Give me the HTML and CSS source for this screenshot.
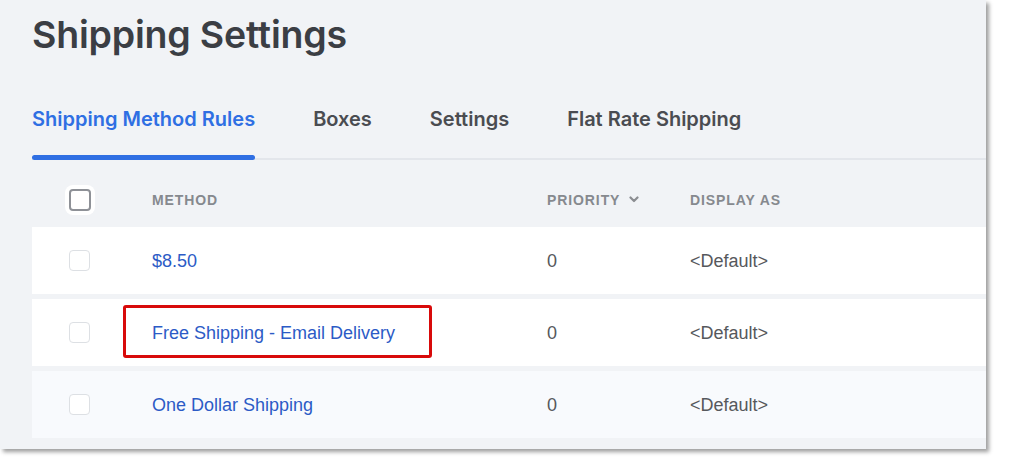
FILE: index.html
```html
<!DOCTYPE html>
<html lang="en">
<head>
<meta charset="utf-8">
<title>Shipping Settings</title>
<link rel="stylesheet" href="styles.css">
</head>
<body>
<div class="frame">
  <div class="page">
    <h1 class="title">Shipping Settings</h1>
    <nav class="tabs">
      <a class="tab active">Shipping Method Rules</a>
      <a class="tab">Boxes</a>
      <a class="tab">Settings</a>
      <a class="tab">Flat Rate Shipping</a>
    </nav>
    <div class="table">
      <div class="row head">
        <div class="c-check"><span class="box head-box"></span></div>
        <div class="c-method label">METHOD</div>
        <div class="c-priority label">PRIORITY
          <svg class="chev" width="10" height="7" viewBox="0 0 10 7"><path d="M1.5 1.5 L5 5 L8.5 1.5" fill="none" stroke="#8b8d91" stroke-width="2.2" stroke-linecap="round" stroke-linejoin="round"/></svg>
        </div>
        <div class="c-display label">DISPLAY AS</div>
      </div>
      <div class="rows">
        <div class="row item">
          <div class="c-check"><span class="box"></span></div>
          <div class="c-method link">$8.50</div>
          <div class="c-priority val">0</div>
          <div class="c-display val">&lt;Default&gt;</div>
        </div>
        <div class="row item">
          <div class="c-check"><span class="box"></span></div>
          <div class="c-method link">Free Shipping - Email Delivery<span class="highlight"></span></div>
          <div class="c-priority val">0</div>
          <div class="c-display val">&lt;Default&gt;</div>
        </div>
        <div class="row item alt">
          <div class="c-check"><span class="box"></span></div>
          <div class="c-method link">One Dollar Shipping</div>
          <div class="c-priority val">0</div>
          <div class="c-display val">&lt;Default&gt;</div>
        </div>
      </div>
    </div>
  </div>
</div>
</body>
</html>
```
FILE: styles.css
```css
* { box-sizing: border-box; }
html, body { margin: 0; padding: 0; background: #ffffff; }
body { width: 1024px; height: 466px; overflow: hidden; }

.frame {
  width: 986px;
  height: 449px;
  background: #f1f3f6;
  box-shadow: 3px 3px 4px rgba(0, 0, 0, 0.38);
  overflow: hidden;
}

.page { padding-left: 32px; }

.title {
  margin: 0;
  padding-top: 13px;
  height: 90px;
  font-family: Inter, "Noto Sans", sans-serif;
  font-weight: 600;
  font-size: 37.5px;
  line-height: 44px;
  color: #3b3e44;
  letter-spacing: -0.2px;
}

.tabs {
  display: flex;
  gap: 58px;
  height: 70px;
  border-bottom: 2px solid #e3e6eb;
}

.tab {
  position: relative;
  display: block;
  padding-top: 15px;
  font-family: Inter, "Noto Sans", sans-serif;
  font-weight: 600;
  font-size: 20px;
  line-height: 28px;
  color: #4a4c51;
}

.tab.active { color: #2f6fe3; }
.tab.active::after {
  content: "";
  position: absolute;
  left: 0;
  right: 0;
  bottom: -2px;
  height: 5px;
  border-radius: 3px;
  background: #2f6fe3;
}

.table { display: flex; flex-direction: column; }

.rows {
  display: flex;
  flex-direction: column;
  gap: 5px;
}

.row {
  display: flex;
  align-items: center;
  height: 67px;
}

.row.head { padding-top: 12px; }

.row.item { background: #ffffff; }
.row.item.alt { background: #f8fafd; }

.c-check { width: 120px; padding-left: 37px; display: flex; align-items: center; }
.c-method { position: relative; width: 395px; }
.c-priority { width: 143px; display: flex; align-items: center; gap: 9px; }
.c-display { flex: 1; }

.box {
  display: block;
  width: 21px;
  height: 21px;
  border: 1px solid #dde0e4;
  border-radius: 4px;
  background: #ffffff;
}

.head-box {
  width: 22px;
  height: 22px;
  border: 2px solid #8e9197;
  border-radius: 4px;
  box-shadow: 0 0 0 4px #ffffff;
}

.label {
  font-family: "Liberation Sans", Arial, sans-serif;
  font-weight: 700;
  font-size: 14px;
  line-height: 20px;
  letter-spacing: 0.9px;
  color: #86898e;
}

.chev { display: block; }

.link {
  font-family: "Liberation Sans", Arial, sans-serif;
  font-size: 18px;
  line-height: 20px;
  color: #2c5bc6;
}

.val {
  font-family: "Liberation Sans", Arial, sans-serif;
  font-size: 18px;
  line-height: 20px;
  color: #56585c;
}

.highlight {
  position: absolute;
  left: -29px;
  top: -18px;
  width: 309px;
  height: 53px;
  border: 3px solid #d80a0a;
  border-radius: 3px;
}
```
